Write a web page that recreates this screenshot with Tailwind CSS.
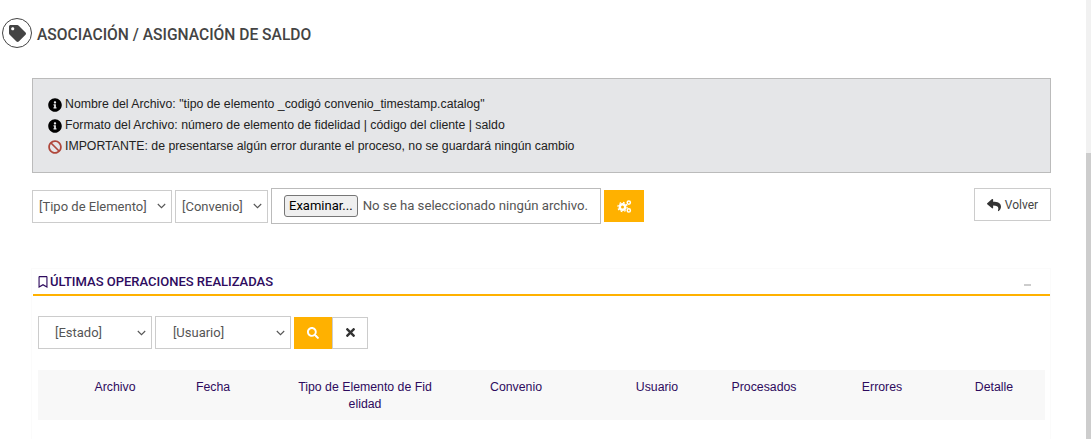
<!DOCTYPE html>
<html lang="es">
<head>
  <meta charset="utf-8"/>
  <title>Asociación / Asignación de Saldo</title>
  <script src="https://cdn.jsdelivr.net/npm/@tailwindcss/browser@4"></script>
</head>
<body class="bg-white overflow-hidden">
  <div class="flex w-[1091px] h-[439px] overflow-hidden font-['Roboto',sans-serif]">
    <main class="w-[1086px] shrink-0 pl-[32px] pr-[35px]">

      <!-- title -->
      <div class="flex items-center h-[30px] mt-[18px] -ml-[30px]">
        <span class="flex items-center justify-center w-[30px] h-[30px] rounded-full border border-[#444]">
          <svg class="w-[17px] h-[17px] text-[#444]" viewBox="0 0 512 512" fill="currentColor"><path d="M0 252.118V48C0 21.49 21.49 0 48 0h204.118a48 48 0 0 1 33.941 14.059l211.882 211.882c18.745 18.745 18.745 49.137 0 67.882L293.823 497.941c-18.745 18.745-49.137 18.745-67.882 0L14.059 286.059A48 48 0 0 1 0 252.118zM112 64c-26.51 0-48 21.49-48 48s21.49 48 48 48 48-21.49 48-48-21.49-48-48-48z"/></svg>
        </span>
        <h1 class="ml-[5px] pt-[6px] text-[15.6px] font-medium text-[#444] leading-none">ASOCIACIÓN / ASIGNACIÓN DE SALDO</h1>
      </div>

      <!-- info box -->
      <div class="mt-[30px] h-[95px] bg-[#e5e6e8] border border-[#bbb] pl-[15px] pt-[15px] font-['Liberation_Sans',sans-serif] text-[12.3px] text-[#222] leading-[21px]">
        <p class="flex items-center gap-[3px]">
          <svg class="w-[14px] h-[14px] text-black" viewBox="0 0 512 512" fill="currentColor"><path d="M256 8C119.043 8 8 119.083 8 256c0 136.997 111.043 248 248 248s248-111.003 248-248C504 119.083 392.957 8 256 8zm0 110c23.196 0 42 18.804 42 42s-18.804 42-42 42-42-18.804-42-42 18.804-42 42-42zm56 254c0 6.627-5.373 12-12 12h-88c-6.627 0-12-5.373-12-12v-24c0-6.627 5.373-12 12-12h12v-64h-12c-6.627 0-12-5.373-12-12v-24c0-6.627 5.373-12 12-12h64c6.627 0 12 5.373 12 12v100h12c6.627 0 12 5.373 12 12v24z"/></svg>
          Nombre del Archivo: "tipo de elemento _codigó convenio_timestamp.catalog"
        </p>
        <p class="flex items-center gap-[3px]">
          <svg class="w-[14px] h-[14px] text-black" viewBox="0 0 512 512" fill="currentColor"><path d="M256 8C119.043 8 8 119.083 8 256c0 136.997 111.043 248 248 248s248-111.003 248-248C504 119.083 392.957 8 256 8zm0 110c23.196 0 42 18.804 42 42s-18.804 42-42 42-42-18.804-42-42 18.804-42 42-42zm56 254c0 6.627-5.373 12-12 12h-88c-6.627 0-12-5.373-12-12v-24c0-6.627 5.373-12 12-12h12v-64h-12c-6.627 0-12-5.373-12-12v-24c0-6.627 5.373-12 12-12h64c6.627 0 12 5.373 12 12v100h12c6.627 0 12 5.373 12 12v24z"/></svg>
          Formato del Archivo: número de elemento de fidelidad | código del cliente | saldo
        </p>
        <p class="flex items-center gap-[3px]">
          <svg class="w-[14px] h-[14px] text-[#b0483c]" viewBox="0 0 512 512" fill="currentColor"><path d="M256 8C119.034 8 8 119.033 8 256s111.034 248 248 248 248-111.034 248-248S392.967 8 256 8zm130.108 117.892c65.448 65.448 70 165.481 20.677 235.637L150.47 105.216c70.204-49.356 170.226-44.735 235.638 20.676zM125.892 386.108c-65.448-65.448-70-165.481-20.677-235.637L361.53 406.784c-70.203 49.356-170.226 44.736-235.638-20.676z"/></svg>
          IMPORTANTE: de presentarse algún error durante el proceso, no se guardará ningún cambio
        </p>
      </div>

      <!-- upload row -->
      <div class="flex items-start mt-[15px] h-[36px]">
        <div class="relative w-[140px] h-[33px] mt-[2px]">
          <select class="appearance-none w-full h-full bg-white border border-[#ccc] pl-[6px] text-[13px] text-[#555]"><option>[Tipo de Elemento]</option></select>
          <svg class="absolute right-[6px] top-[13px] w-[9px] h-[6px] pointer-events-none text-[#555]" viewBox="0 0 9 6" fill="none" stroke="currentColor" stroke-width="1.1"><path d="M.8 1l3.7 3.7L8.2 1"/></svg>
        </div>
        <div class="relative w-[93px] h-[33px] mt-[2px] ml-[3px]">
          <select class="appearance-none w-full h-full bg-white border border-[#ccc] pl-[6px] text-[13px] text-[#555]"><option>[Convenio]</option></select>
          <svg class="absolute right-[6px] top-[13px] w-[9px] h-[6px] pointer-events-none text-[#555]" viewBox="0 0 9 6" fill="none" stroke="currentColor" stroke-width="1.1"><path d="M.8 1l3.7 3.7L8.2 1"/></svg>
        </div>
        <div class="flex items-center w-[330px] h-[36px] ml-[3px] bg-white border border-[#bbb] pl-[12px] text-[13.2px] text-[#555]">
          <button class="h-[22px] px-[4px] bg-[#efefef] border border-[#767676] rounded-[3px] text-[13px] text-black">Examinar...</button>
          <span class="ml-[5px]">No se ha seleccionado ningún archivo.</span>
        </div>
        <button class="flex items-center justify-center w-[40px] h-[32px] mt-[2px] ml-[3px] bg-[#ffb100]">
          <svg class="w-[15px] h-[15px]" viewBox="0 0 15 15" fill="none" stroke="white">
            <circle cx="5.5" cy="8" r="2.7" stroke-width="2.4"/>
            <circle cx="5.5" cy="8" r="4.6" stroke-width="1.2" stroke-dasharray="1.7 1.9"/>
            <circle cx="11.8" cy="3.6" r="1.6" stroke-width="1.5"/>
            <circle cx="11.8" cy="11.4" r="1.6" stroke-width="1.5"/>
          </svg>
        </button>
        <button class="flex items-center justify-center gap-[4px] w-[77px] h-[33px] ml-auto bg-white border border-[#ccc] text-[12px] text-[#444]">
          <svg class="w-[14px] h-[14px] text-[#333]" viewBox="0 0 512 512" fill="currentColor"><path d="M8.309 189.836L184.313 37.851C199.719 24.546 224 35.347 224 56.015v80.053c160.629 1.839 288 34.032 288 186.258 0 61.441-39.581 122.309-83.333 154.132-13.653 9.931-33.111-2.533-28.077-18.631 45.344-145.012-21.507-183.51-176.59-185.742V360c0 20.7-24.3 31.453-39.687 18.164l-176.004-152c-11.071-9.562-11.086-26.753 0-36.328z"/></svg>
          Volver
        </button>
      </div>

      <!-- last operations panel -->
      <section class="mt-[44px] -ml-[1px] h-[175px] border-x border-t border-[#fbfbfb] pl-[1px]">
        <div class="flex items-center h-[27px] pl-[5px] pr-[19px] pt-[1px] border-b-2 border-[#ffb100]">
          <svg class="w-[10px] h-[12px] text-[#2e0b5e]" viewBox="0 0 384 512" fill="currentColor"><path d="M336 0H48C21.49 0 0 21.49 0 48v464l192-112 192 112V48c0-26.51-21.49-48-48-48zm0 428.43l-144-84-144 84V54a6 6 0 0 1 6-6h276c3.309 0 6 2.691 6 6z"/></svg>
          <h2 class="ml-[2px] text-[13px] font-medium text-[#2e0b5e]">ÚLTIMAS OPERACIONES REALIZADAS</h2>
          <span class="ml-auto mt-[6px] w-[7px] h-[2px] bg-[#ccc]"></span>
        </div>

        <div class="flex items-center mt-[20px] ml-[5px]">
          <div class="relative w-[114px] h-[33px]">
            <select class="appearance-none w-full h-full bg-white border border-[#ccc] pl-[16px] text-[13px] text-[#555]"><option>[Estado]</option></select>
            <svg class="absolute right-[6px] top-[14px] w-[9px] h-[6px] pointer-events-none text-[#555]" viewBox="0 0 9 6" fill="none" stroke="currentColor" stroke-width="1.1"><path d="M.8 1l3.7 3.7L8.2 1"/></svg>
          </div>
          <div class="relative w-[136px] h-[33px] ml-[3px]">
            <select class="appearance-none w-full h-full bg-white border border-[#ccc] pl-[17px] text-[13px] text-[#555]"><option>[Usuario]</option></select>
            <svg class="absolute right-[6px] top-[14px] w-[9px] h-[6px] pointer-events-none text-[#555]" viewBox="0 0 9 6" fill="none" stroke="currentColor" stroke-width="1.1"><path d="M.8 1l3.7 3.7L8.2 1"/></svg>
          </div>
          <button class="flex items-center justify-center w-[38px] h-[32px] ml-[3px] bg-[#ffb100]">
            <svg class="w-[12px] h-[12px] text-white" viewBox="0 0 512 512" fill="currentColor"><path d="M505 442.7L405.3 343c-4.5-4.5-10.6-7-17-7H372c27.6-35.3 44-79.7 44-128C416 93.1 322.9 0 208 0S0 93.1 0 208s93.1 208 208 208c48.3 0 92.7-16.4 128-44v16.3c0 6.4 2.5 12.5 7 17l99.7 99.7c9.4 9.4 24.6 9.4 33.9 0l28.3-28.3c9.4-9.4 9.4-24.6.1-34zM208 336c-70.7 0-128-57.2-128-128 0-70.7 57.2-128 128-128 70.7 0 128 57.2 128 128 0 70.7-57.2 128-128 128z"/></svg>
          </button>
          <button class="flex items-center justify-center w-[36px] h-[32px] bg-white border border-[#ccc]">
            <svg class="w-[9px] h-[13px] text-[#333]" viewBox="0 0 352 512" fill="currentColor"><path d="M242.72 256l100.07-100.07c12.28-12.28 12.28-32.19 0-44.48l-22.24-22.24c-12.28-12.28-32.19-12.28-44.48 0L176 189.28 75.93 89.21c-12.28-12.28-32.19-12.28-44.48 0L9.21 111.45c-12.28 12.28-12.28 32.19 0 44.48L109.28 256 9.21 356.07c-12.28 12.28-12.28 32.19 0 44.48l22.24 22.24c12.28 12.28 32.2 12.28 44.48 0L176 322.72l100.07 100.07c12.28 12.28 32.2 12.28 44.48 0l22.24-22.24c12.28-12.28 12.28-32.19 0-44.48L242.72 256z"/></svg>
          </button>
        </div>

        <div class="grid grid-cols-[154px_42px_61px_140px_162px_120px_94px_142px_82px] w-[1007px] h-[50px] mt-[21px] ml-[5px] pt-[9px] bg-[#f8f8f8] font-['Liberation_Sans',sans-serif] text-[12.3px] leading-[17px] text-[#2e0b5e] text-center">
          <span>Archivo</span>
          <span>Fecha</span>
          <span></span>
          <span class="break-all">Tipo de Elemento de Fidelidad</span>
          <span>Convenio</span>
          <span>Usuario</span>
          <span>Procesados</span>
          <span>Errores</span>
          <span>Detalle</span>
        </div>
      </section>
    </main>

    <!-- page scrollbar -->
    <div class="w-[5px] h-full bg-[#cdcdcd]">
      <div class="h-[153px] bg-[#f1f1f1]"></div>
    </div>
  </div>
</body>
</html>
